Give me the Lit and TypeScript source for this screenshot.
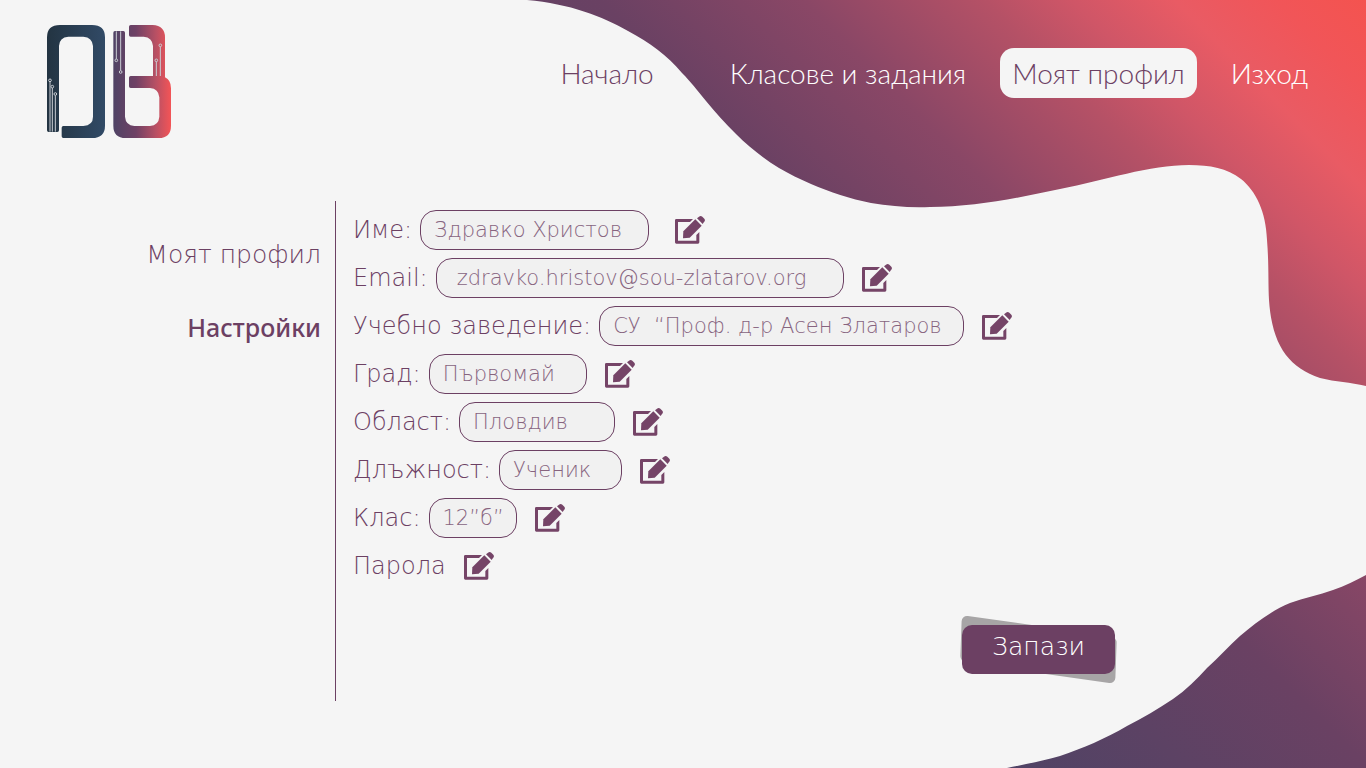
import { LitElement, html, css, svg } from "lit";
import { classMap } from "lit/directives/class-map.js";

interface Field {
  id: string;
  label: string;
  value?: string;
  width?: number;
  roomy?: boolean;
}

const FIELDS: Field[] = [
  { id: "name", label: "Име:", value: "Здравко Христов", width: 229 },
  { id: "email", label: "Email:", value: "zdravko.hristov@sou-zlatarov.org", width: 408, roomy: true },
  { id: "school", label: "Учебно заведение:", value: "СУ  “Проф. д-р Асен Златаров", width: 365 },
  { id: "city", label: "Град:", value: "Първомай", width: 158 },
  { id: "region", label: "Област:", value: "Пловдив", width: 156 },
  { id: "role", label: "Длъжност:", value: "Ученик", width: 123 },
  { id: "grade", label: "Клас:", value: "12”б”", width: 88 },
  { id: "password", label: "Парола" },
];

const NAV = [
  { text: "Начало", style: "dark" },
  { text: "Класове и задания", style: "" },
  { text: "Моят профил", style: "active" },
  { text: "Изход", style: "" },
];

class BrandLogo extends LitElement {
  static styles = css`
    :host { display: block; }
    svg { display: block; width: 124px; height: 113px; }
  `;
  render() {
    return html`<svg viewBox="51 45 372 339" role="img" aria-label="DB">
      <defs>
        <linearGradient id="navy" gradientUnits="userSpaceOnUse" x1="51" y1="0" x2="225" y2="0">
          <stop offset="0" stop-color="#233442" /><stop offset="1" stop-color="#314a66" />
        </linearGradient>
        <linearGradient id="warm" gradientUnits="userSpaceOnUse" x1="250" y1="215" x2="420" y2="215">
          <stop offset="0" stop-color="#4f4365" /><stop offset=".4" stop-color="#6f4165" />
          <stop offset=".75" stop-color="#b85064" /><stop offset="1" stop-color="#f05457" />
        </linearGradient>
      </defs>
      <path fill="url(#navy)" d="M51 361V82Q51 45 90 45H186Q225 45 225 82V347Q225 384 186 384H100Q95 384 95 379V353Q95 348 100 348H160Q189 346 189 320V108Q187 82 160 80H115Q88 82 87 108V361Q87 366 82 366H56Q51 366 51 361Z" />
      <path fill="url(#warm)" d="M250 68Q250 63 255 63H280Q285 63 285 68V320Q287 346 313 348H360Q386 346 388 320V262Q386 236 360 234H302Q297 234 297 229V203Q297 198 302 198H369V108Q367 82 341 80H302Q297 80 297 75V50Q297 45 302 45H368Q405 47 405 82V202Q423 210 423 235V347Q423 384 386 384H287Q250 384 250 347Z" />
      <g fill="none" stroke="#c9cdd3" stroke-width="3">
        <path d="M60 216V365M67 234V365M76 256V365M259 64V147M272 64V182M379 155V198M391 110V198" />
        <circle cx="60" cy="211" r="4" /><circle cx="67" cy="230" r="4" /><circle cx="76" cy="252" r="4" />
        <circle cx="259" cy="151" r="4" /><circle cx="272" cy="186" r="4" />
        <circle cx="379" cy="151" r="4" /><circle cx="391" cy="106" r="4" />
      </g>
    </svg>`;
  }
}
customElements.define("brand-logo", BrandLogo);

const editIcon = svg`<svg class="icon" viewBox="0 0 90 84" aria-hidden="true">
  <path fill="#754467" fill-rule="evenodd" d="M4 9H54L45 18H9V74H64V57L73 48V79Q73 83 69 83H4Q0 83 0 79V13Q0 9 4 9Z" />
  <path fill="#754467" d="M24 67L25 46L61 10L80 29L44 65Z" />
  <path fill="#754467" d="M66 7L72 2Q77 -2 82 2L88 8Q92 13 87 18L83 24Z" />
</svg>`;

class AppRoot extends LitElement {
  static styles = css`
    :host {
      display: block;
      position: relative;
      min-height: 100vh;
      overflow: hidden;
      background: #f5f5f5;
      color: #6c4063;
      font-family: "DejaVu Sans", sans-serif;
      font-weight: 200;
    }
    * { box-sizing: border-box; }
    .backdrop { position: absolute; inset: 0; width: 100%; height: 100%; }
    .page { position: relative; }
    header {
      display: flex;
      justify-content: space-between;
      align-items: flex-start;
      padding: 25px 46px 0 47px;
      height: 201px;
    }
    nav { display: flex; gap: 22px; padding-top: 23px; }
    nav a {
      padding: 0 12px;
      font: 300 28px/50px Lato, sans-serif;
      color: #fff;
      text-decoration: none;
      white-space: nowrap;
      border-radius: 14px;
    }
    nav a.dark { color: #6c4063; margin-right: 30px; }
    nav a.active { color: #6c4063; background: #f5f5f5; }
    main { display: grid; grid-template-columns: 336px 1fr; }
    aside {
      display: flex;
      flex-direction: column;
      align-items: flex-end;
      gap: 36px;
      min-height: 500px;
      padding: 36px 14px 0 0;
      border-right: 1px solid #6c4063;
    }
    aside a { font-size: 25px; line-height: 36px; color: inherit; text-decoration: none; white-space: nowrap; }
    aside a.current { font-family: "Noto Sans", sans-serif; font-weight: 500; }
    form { display: flex; flex-direction: column; gap: 8px; padding: 9px 0 0 17px; }
    .row { display: flex; align-items: center; height: 40px; }
    label, .label { font-size: 24px; line-height: 40px; white-space: pre; }
    input {
      height: 40px;
      margin-left: 8px;
      padding: 0 13px;
      border: 1px solid #6c4063;
      border-radius: 16px;
      background: #f1f1f1;
      color: #87647f;
      font: 200 21px "DejaVu Sans", sans-serif;
    }
    input.roomy { padding: 0 20px; }
    .edit { margin-left: 18px; padding: 0; border: 0; background: none; cursor: pointer; }
    .row:first-child .edit { margin-left: 26px; }
    .icon { display: block; width: 30px; height: 28px; }
    .save {
      position: relative;
      z-index: 0;
      align-self: flex-end;
      width: 153px;
      height: 49px;
      margin: 31px 251px 0 0;
      padding: 0 0 6px;
      border: 0;
      background: none;
      color: #fff;
      font: 200 25px "DejaVu Sans", sans-serif;
    }
    .save::before, .save::after { content: ""; position: absolute; inset: 0; z-index: -1; border-radius: 10px; background: #6c4063; }
    .save::before { inset: 1px -1px; border-radius: 6px; background: #a7a5a6; transform: skewY(8deg) skewX(-2deg); }
  `;

  render() {
    return html`
      <svg class="backdrop" viewBox="0 0 1366 768" preserveAspectRatio="none" aria-hidden="true">
        <defs>
          <linearGradient id="sunset" gradientUnits="userSpaceOnUse" x1="1010" y1="768" x2="1572" y2="206">
            <stop offset="0" stop-color="#4f4365" /><stop offset=".32" stop-color="#6a4163" />
            <stop offset=".5" stop-color="#8a4766" /><stop offset=".66" stop-color="#b55166" />
            <stop offset=".74" stop-color="#d05667" /><stop offset=".83" stop-color="#e95b64" />
            <stop offset=".92" stop-color="#f15558" /><stop offset="1" stop-color="#f4534f" />
          </linearGradient>
        </defs>
        <path fill="url(#sunset)" d="M527 0C570 4 602 16 628 31C650 43 667 55 682 73C691 82 697 90 706 101C716 113 725 123 736 134C749 147 763 158 779 168C789 174 800 179 811 184C830 192 850 199 871 203C890 206 910 208 930 207C975 207 1018 198 1060 189C1105 180 1150 165 1189 165C1210 165 1227 168 1241 179C1256 191 1266 212 1267 240C1269 265 1268 283 1269 300C1272 345 1288 367 1320 378C1336 382 1350 382 1366 386V0Z" />
        <path fill="url(#sunset)" d="M1007 768C1026 764 1043 761 1060 756C1083 748 1105 739 1127 726C1143 718 1158 709 1173 699C1186 690 1197 679 1207 668C1218 658 1229 646 1240 636C1255 623 1271 611 1290 603C1304 598 1319 595 1333 590C1345 586 1356 580 1366 575V768Z" />
      </svg>
      <div class="page">
        <header>
          <brand-logo></brand-logo>
          <nav>
            ${NAV.map((n) => html`<a href="#" class=${classMap({ dark: n.style === "dark", active: n.style === "active" })}>${n.text}</a>`)}
          </nav>
        </header>
        <main>
          <aside>
            <a href="#">Моят профил</a>
            <a href="#" class="current">Настройки</a>
          </aside>
          <form @submit=${(e: Event) => e.preventDefault()}>
            ${FIELDS.map((f) => html`<div class="row">
              ${f.value
                ? html`<label for=${f.id}>${f.label}</label><input id=${f.id} class=${classMap({ roomy: !!f.roomy })} .value=${f.value} style="width:${f.width}px" />`
                : html`<span class="label">${f.label}</span>`}
              <button class="edit" type="button" aria-label="Редактиране">${editIcon}</button>
            </div>`)}
            <button class="save">Запази</button>
          </form>
        </main>
      </div>
    `;
  }
}
customElements.define("app-root", AppRoot);
